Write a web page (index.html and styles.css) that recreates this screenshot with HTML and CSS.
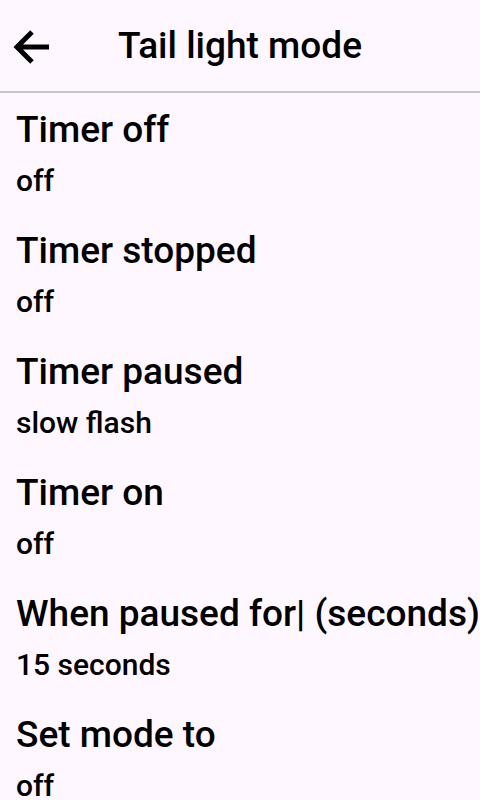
FILE: index.html
```html
<!DOCTYPE html>
<html>
<head>
<meta charset="utf-8">
<link rel="stylesheet" href="styles.css">
</head>
<body>
<div class="app">
  <header class="bar">
    <span class="back">
      <svg width="40" height="40" viewBox="0 0 40 40"><path d="M38 20H8M21 5L6 20l15 15" fill="none" stroke="#000" stroke-width="5"/></svg>
    </span>
    <h1 class="title">Tail light mode</h1>
  </header>
  <ul class="list">
    <li class="item"><div class="label">Timer off</div><div class="value">off</div></li>
    <li class="item"><div class="label">Timer stopped</div><div class="value">off</div></li>
    <li class="item"><div class="label">Timer paused</div><div class="value">slow flash</div></li>
    <li class="item"><div class="label">Timer on</div><div class="value">off</div></li>
    <li class="item"><div class="label">When paused for| (seconds)</div><div class="value">15 seconds</div></li>
    <li class="item"><div class="label">Set mode to</div><div class="value">off</div></li>
  </ul>
</div>
</body>
</html>
```
FILE: styles.css
```css
html, body {
  margin: 0;
  padding: 0;
  background: #fef7ff;
}
body {
  font-family: Roboto, "Noto Sans", sans-serif;
  color: #000;
  width: 480px;
  height: 800px;
  overflow: hidden;
}
.bar {
  height: 91px;
  display: flex;
  align-items: center;
  border-bottom: 2px solid #c6c6c6;
  box-sizing: content-box;
}
.back {
  display: flex;
  width: 40px;
  height: 40px;
  margin-left: 11px;
  margin-top: 2px;
}
.title {
  margin: 1px 0 0 67px;
  font-size: 37px;
  font-weight: 500;
  line-height: 44px;
  white-space: nowrap;
}
.list {
  list-style: none;
  margin: 0;
  padding: 0;
}
.item {
  padding: 15px 0 15px 16px;
  white-space: nowrap;
}
.label {
  font-size: 37px;
  font-weight: 500;
  line-height: 44px;
}
.value {
  font-size: 30px;
  font-weight: 500;
  line-height: 36px;
  margin-top: 11px;
}
```
